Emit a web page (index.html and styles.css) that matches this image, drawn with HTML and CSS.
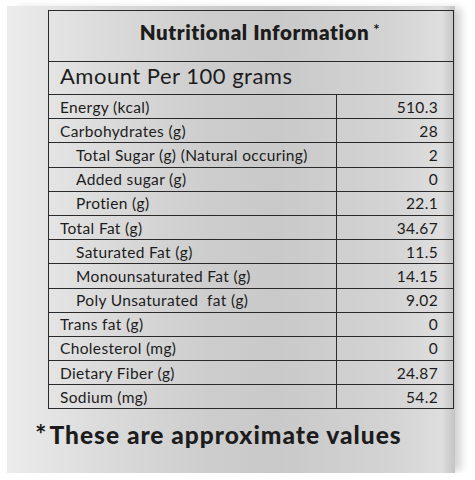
FILE: index.html
```html
<!DOCTYPE html>
<html lang="en">
<head>
    <meta charset="UTF-8">
    <meta name="viewport" content="width=device-width, initial-scale=1.0">
    <title>Nutritional Information</title>
    <link rel="stylesheet" href="styles.css">
</head>
<body>
    <div class="pack">
        <table class="facts">
            <colgroup>
                <col class="col-name">
                <col class="col-val">
            </colgroup>
            <tr class="facts-title">
                <th colspan="2">Nutritional Information<sup>*</sup></th>
            </tr>
            <tr class="facts-amount">
                <td colspan="2">Amount Per 100 grams</td>
            </tr>
            <tr><td>Energy (kcal)</td><td class="val">510.3</td></tr>
            <tr><td>Carbohydrates (g)</td><td class="val">28</td></tr>
            <tr><td class="sub">Total Sugar (g) (Natural occuring)</td><td class="val">2</td></tr>
            <tr><td class="sub">Added sugar (g)</td><td class="val">0</td></tr>
            <tr><td class="sub">Protien (g)</td><td class="val">22.1</td></tr>
            <tr><td>Total Fat (g)</td><td class="val">34.67</td></tr>
            <tr><td class="sub">Saturated Fat (g)</td><td class="val">11.5</td></tr>
            <tr><td class="sub">Monounsaturated Fat (g)</td><td class="val">14.15</td></tr>
            <tr><td class="sub">Poly Unsaturated&nbsp; fat (g)</td><td class="val">9.02</td></tr>
            <tr><td>Trans fat (g)</td><td class="val">0</td></tr>
            <tr><td>Cholesterol (mg)</td><td class="val">0</td></tr>
            <tr><td>Dietary Fiber (g)</td><td class="val">24.87</td></tr>
            <tr><td>Sodium (mg)</td><td class="val">54.2</td></tr>
        </table>
        <p class="note"><span class="star">*</span>These are approximate values</p>
    </div>
</body>
</html>
```

FILE: styles.css
```css
:root {
    --ink: #1c1c1c;
    --line: #2a2a2a;
}

* {
    margin: 0;
    padding: 0;
    box-sizing: border-box;
}

body {
    background: #ffffff;
    font-family: Lato, "Open Sans", sans-serif;
    color: var(--ink);
}

.pack {
    margin: 6px 0 0 7px;
    width: 448px;
    height: 467px;
    padding: 4px 0 0 41px;
    background: linear-gradient(90deg, #ececec 0%, #dcdcdc 20%, #cdcdcd 45%, #c9c9c9 60%, #d3d3d3 85%, #dedede 97%, #c4c4c4 100%);
    box-shadow: 8px 0 8px -2px rgba(0, 0, 0, 0.18);
}

.facts {
    width: 405px;
    border-collapse: collapse;
    table-layout: fixed;
}

.col-name {
    width: 288px;
}

.col-val {
    width: 117px;
}

.facts td,
.facts th {
    border: 1.5px solid var(--line);
}

.facts td {
    height: 24.2px;
    font-size: 15.5px;
    line-height: 16px;
    letter-spacing: 0.35px;
    padding: 0 0 0 11px;
    white-space: nowrap;
}

.facts td.sub {
    padding-left: 27px;
}

.facts td.val {
    text-align: right;
    padding: 0 15px 0 0;
}

.facts-title th {
    height: 51px;
    font-size: 20.5px;
    font-weight: 800;
    text-align: center;
    padding: 0 0 9px 18px;
    letter-spacing: 0.6px;
}

.facts-title sup {
    font-size: 15px;
    font-weight: 700;
    margin-left: 4px;
    vertical-align: 5px;
}

.facts-amount td {
    height: 33px;
    font-size: 22px;
    padding: 0 0 4px 11px;
    letter-spacing: 0.5px;
}

.note {
    margin: 10px 0 0 -13px;
    font-size: 24.5px;
    font-weight: 900;
    line-height: 30px;
    letter-spacing: 1px;
}

.note .star {
    font-size: 27px;
    font-weight: 700;
    margin-right: 2px;
}
```
